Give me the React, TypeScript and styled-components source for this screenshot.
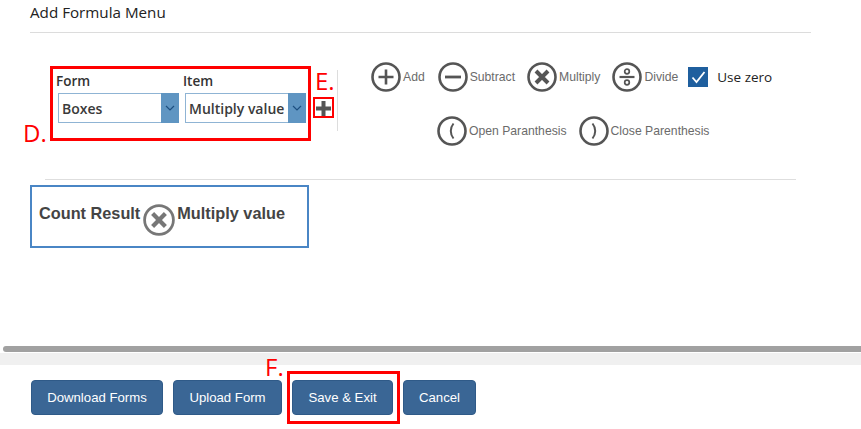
import styled, { createGlobalStyle } from "styled-components";

const GlobalStyle = createGlobalStyle`
  html, body {
    margin: 0;
    padding: 0;
    background: #fff;
  }
`;

const Page = styled.div`
  position: relative;
  width: 861px;
  height: 429px;
  overflow: hidden;
  background: #fff;
  font-family: "Liberation Sans", Arial, sans-serif;
`;

const Title = styled.h2`
  margin: 0 50px 0 30px;
  height: 33px;
  box-sizing: border-box;
  padding-top: 3px;
  border-bottom: 1px solid #dcdcdc;
  font-family: "Open Sans", sans-serif;
  font-size: 15.2px;
  line-height: 19px;
  font-weight: 400;
  color: #222;
`;

const Builder = styled.div`
  display: flex;
  align-items: flex-start;
  height: 146px;
  box-sizing: border-box;
  padding: 37px 0 0 56px;
`;

const Pickers = styled.div`
  display: flex;
  width: 281px;
  height: 61px;
  border-right: 1px solid #ddd;
`;

const Field = styled.div<{ $width: number }>`
  width: ${(p) => p.$width}px;
`;

const FieldLabel = styled.div`
  font-family: "Open Sans", sans-serif;
  font-size: 13.5px;
  font-weight: 600;
  line-height: 18px;
  margin-top: 2px;
  color: #333;
`;

const Select = styled.div`
  display: flex;
  justify-content: space-between;
  align-items: stretch;
  margin: 3px 0 0 2px;
  width: 121px;
  height: 30px;
  box-sizing: border-box;
  border: 1px solid #8fb4d4;
  border-right: 0;
  background: #fff;
`;

const SelectText = styled.span`
  font-family: "Open Sans", sans-serif;
  font-size: 14px;
  font-weight: 600;
  line-height: 29px;
  padding-left: 3px;
  color: #3a3a3a;
  white-space: nowrap;
`;

const SelectArrow = styled.span`
  display: flex;
  align-items: center;
  justify-content: center;
  flex: none;
  width: 18px;
  margin: -1px 0;
  background: #5f95c2;
`;

const PlusButton = styled.span`
  display: block;
  margin: 31px 0 0 10px;
  width: 15px;
  height: 15px;
`;

const Operators = styled.div`
  display: flex;
  flex-direction: column;
  margin-left: 33px;
  margin-top: -8px;
`;

const OperatorRow = styled.div<{ $indent?: number }>`
  display: flex;
  align-items: center;
  height: 30px;
  padding-left: ${(p) => p.$indent ?? 0}px;
  & + & {
    margin-top: 24px;
  }
`;

const Operator = styled.div<{ $gap: number }>`
  display: flex;
  align-items: center;
  margin-right: ${(p) => p.$gap}px;
`;

const OperatorLabel = styled.span`
  margin-left: 2px;
  font-size: 12.2px;
  color: #6b6b6b;
  white-space: nowrap;
`;

const CheckBox = styled.span`
  display: flex;
  align-items: center;
  justify-content: center;
  width: 20px;
  height: 20px;
  background: #1f5f9e;
`;

const CheckLabel = styled.span`
  margin-left: 9px;
  font-family: "Open Sans", sans-serif;
  font-size: 13.5px;
  color: #222;
`;

const Rule = styled.div`
  margin: 0 65px 0 45px;
  height: 1px;
  background: #dedede;
`;

const ResultBox = styled.div`
  display: flex;
  align-items: flex-start;
  margin: 5px 0 0 30px;
  width: 279px;
  height: 63px;
  box-sizing: border-box;
  border: 2px solid #4a86c5;
  padding: 17px 0 0 7px;
  font-size: 16.3px;
  font-weight: 700;
  line-height: 19px;
  color: #444;
  white-space: nowrap;
`;

const ResultIcon = styled.span`
  display: block;
  height: 32px;
  margin: 0 2px 0 3px;
`;

const Scrollbar = styled.div`
  margin: 98px 0 0 3px;
  height: 6px;
  border-radius: 3px 0 0 3px;
  background: #a1a1a1;
`;

const ScrollTrack = styled.div`
  margin-top: 1px;
  height: 12px;
  background: #f0f0f0;
`;

const Footer = styled.div`
  display: flex;
  gap: 10px;
  padding: 15px 0 0 31px;
`;

const ActionButton = styled.button<{ $width: number }>`
  width: ${(p) => p.$width}px;
  height: 35px;
  padding: 0;
  border: 1px solid #2f5a88;
  border-radius: 4px;
  background: #3a6695;
  color: #fff;
  font-family: "Liberation Sans", Arial, sans-serif;
  font-size: 13.2px;
  cursor: pointer;
`;

const MarkBox = styled.div<{ $x: number; $y: number; $w: number; $h: number; $line?: number }>`
  position: absolute;
  left: ${(p) => p.$x}px;
  top: ${(p) => p.$y}px;
  width: ${(p) => p.$w}px;
  height: ${(p) => p.$h}px;
  box-sizing: border-box;
  border: ${(p) => p.$line ?? 3}px solid #f00;
  pointer-events: none;
`;

const MarkLetter = styled.span<{ $x: number; $y: number }>`
  position: absolute;
  left: ${(p) => p.$x}px;
  top: ${(p) => p.$y}px;
  font-family: "Open Sans", sans-serif;
  font-size: 24px;
  line-height: 28px;
  color: #f00;
`;

type Glyph = "plus" | "minus" | "times" | "divide" | "open" | "close";

function RoundIcon({ glyph, size = 30, color = "#555" }: { glyph: Glyph; size?: number; color?: string }) {
  return (
    <svg width={size} height={size} viewBox="0 0 30 30" fill="none" stroke={color} style={{ display: "block", flex: "none" }}>
      <circle cx="15" cy="15" r="13.5" strokeWidth="2.6" />
      {glyph === "plus" && <path d="M15 7.5v15M7.5 15h15" strokeWidth="2.6" />}
      {glyph === "minus" && <path d="M7 15h16" strokeWidth="2.8" />}
      {glyph === "times" && <path d="M9 9l12 12M21 9L9 21" strokeWidth="4" />}
      {glyph === "divide" && (
        <>
          <path d="M7.5 15h15" strokeWidth="2.2" />
          <circle cx="15" cy="9.5" r="2.3" strokeWidth="1.7" />
          <circle cx="15" cy="20.5" r="2.3" strokeWidth="1.7" />
        </>
      )}
      {glyph === "open" && <path d="M16.5 7.5c-3.6 4.5-3.6 10.5 0 15" strokeWidth="2" />}
      {glyph === "close" && <path d="M13.5 7.5c3.6 4.5 3.6 10.5 0 15" strokeWidth="2" />}
    </svg>
  );
}

function Chevron() {
  return (
    <svg width="10" height="6" viewBox="0 0 10 6" fill="none" stroke="#1d4f80" strokeWidth="1.2">
      <path d="M1 1l4 4 4-4" />
    </svg>
  );
}

export default function App() {
  return (
    <Page>
      <GlobalStyle />
      <Title>Add Formula Menu</Title>

      <Builder>
        <Pickers>
          <Field $width={127}>
            <FieldLabel>Form</FieldLabel>
            <Select>
              <SelectText>Boxes</SelectText>
              <SelectArrow><Chevron /></SelectArrow>
            </Select>
          </Field>
          <Field $width={123}>
            <FieldLabel>Item</FieldLabel>
            <Select>
              <SelectText>Multiply value</SelectText>
              <SelectArrow><Chevron /></SelectArrow>
            </Select>
          </Field>
          <PlusButton>
            <svg width="15" height="15" viewBox="0 0 15 15" fill="none" stroke="#555" strokeWidth="4" style={{ display: "block" }}>
              <path d="M7.5 0v15M0 7.5h15" />
            </svg>
          </PlusButton>
        </Pickers>

        <Operators>
          <OperatorRow>
            <Operator $gap={13}><RoundIcon glyph="plus" /><OperatorLabel>Add</OperatorLabel></Operator>
            <Operator $gap={12}><RoundIcon glyph="minus" /><OperatorLabel>Subtract</OperatorLabel></Operator>
            <Operator $gap={12}><RoundIcon glyph="times" /><OperatorLabel>Multiply</OperatorLabel></Operator>
            <Operator $gap={10}><RoundIcon glyph="divide" /><OperatorLabel>Divide</OperatorLabel></Operator>
            <CheckBox>
              <svg width="15" height="13" viewBox="0 0 15 13" fill="none" stroke="#fff" strokeWidth="1.8">
                <path d="M1.5 6.5l4 4.5 8-10" />
              </svg>
            </CheckBox>
            <CheckLabel>Use zero</CheckLabel>
          </OperatorRow>
          <OperatorRow $indent={66}>
            <Operator $gap={12}><RoundIcon glyph="open" /><OperatorLabel>Open Paranthesis</OperatorLabel></Operator>
            <Operator $gap={0}><RoundIcon glyph="close" /><OperatorLabel>Close Parenthesis</OperatorLabel></Operator>
          </OperatorRow>
        </Operators>
      </Builder>

      <Rule />

      <ResultBox>
        Count Result
        <ResultIcon><RoundIcon glyph="times" size={32} color="#777" /></ResultIcon>
        Multiply value
      </ResultBox>

      <Scrollbar />
      <ScrollTrack />

      <Footer>
        <ActionButton $width={132}>Download Forms</ActionButton>
        <ActionButton $width={109}>Upload Form</ActionButton>
        <ActionButton $width={101}>Save &amp; Exit</ActionButton>
        <ActionButton $width={73}>Cancel</ActionButton>
      </Footer>

      <MarkBox $x={50} $y={66} $w={261} $h={75} />
      <MarkBox $x={313} $y={97} $w={21} $h={21} $line={2} />
      <MarkBox $x={287} $y={371} $w={113} $h={53} />
      <MarkLetter $x={23} $y={119}>D.</MarkLetter>
      <MarkLetter $x={315} $y={67}>E.</MarkLetter>
      <MarkLetter $x={265} $y={353}>F.</MarkLetter>
    </Page>
  );
}
